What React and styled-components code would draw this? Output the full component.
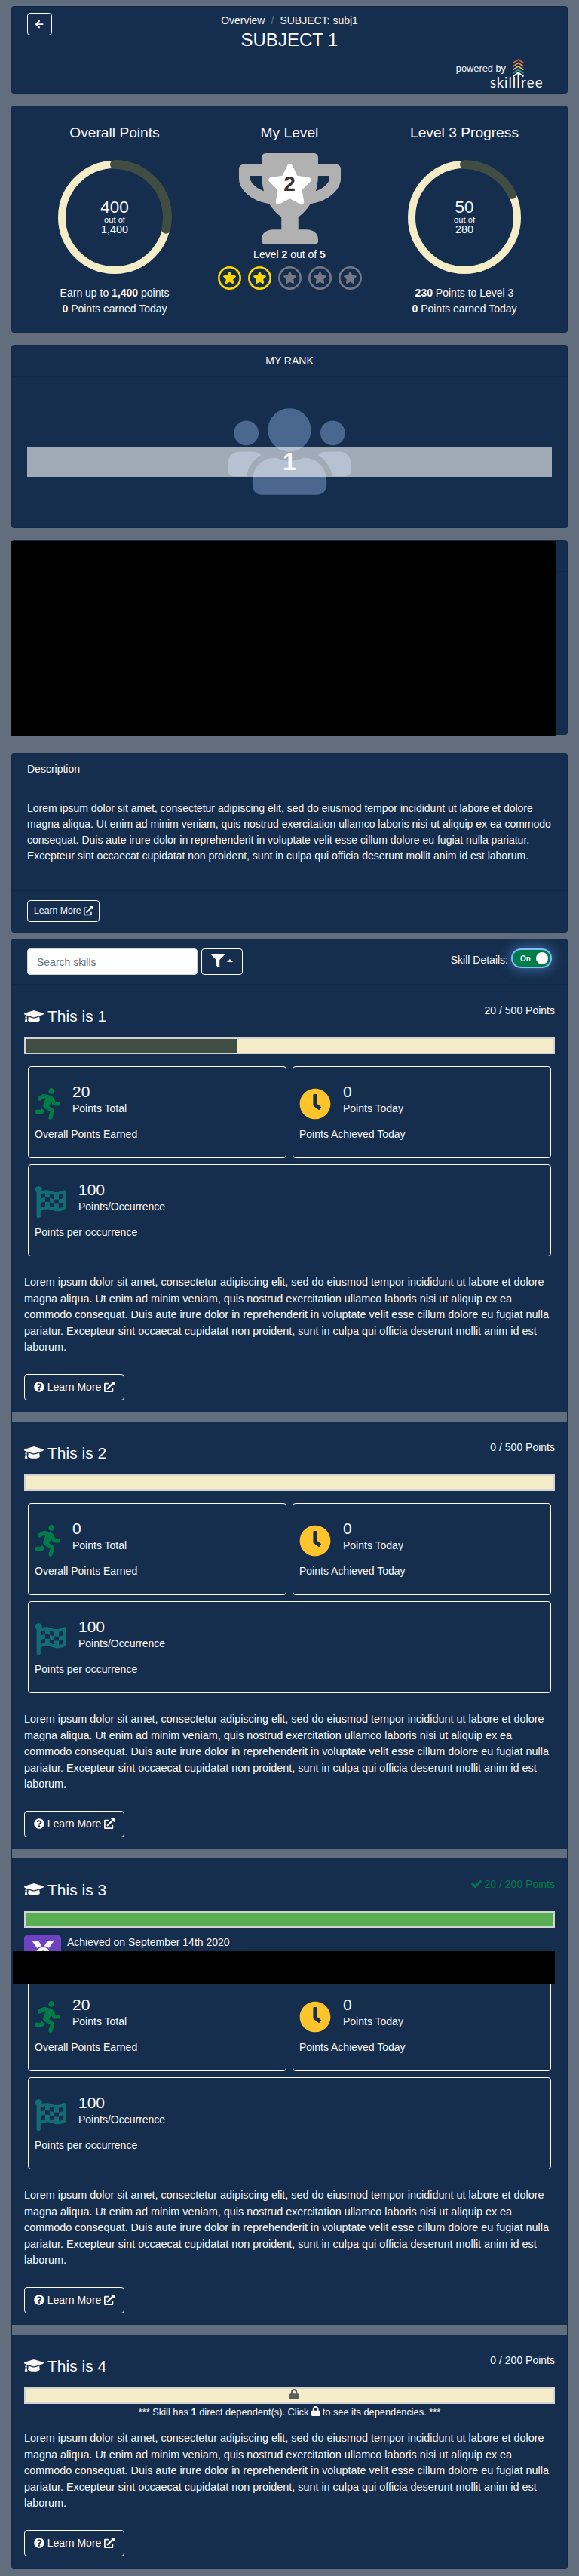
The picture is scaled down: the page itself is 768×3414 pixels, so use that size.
import React from "react";
import styled, { createGlobalStyle } from "styled-components";
import {
  FaArrowLeft, FaTrophy, FaStar, FaUsers, FaExternalLinkAlt, FaFilter, FaGraduationCap,
  FaRunning, FaClock, FaFlagCheckered, FaQuestionCircle, FaCheck, FaMedal, FaLock,
} from "react-icons/fa";

const c = {
  page: "#626d7d",
  card: "#152e4d",
  text: "#fcf9f9",
  cream: "#f5edc8",
  dark: "#3f4d43",
  green: "#007c49",
  edge: "rgba(0,0,0,.125)",
};

const LOREM =
  "Lorem ipsum dolor sit amet, consectetur adipiscing elit, sed do eiusmod tempor incididunt ut labore et dolore magna aliqua. Ut enim ad minim veniam, quis nostrud exercitation ullamco laboris nisi ut aliquip ex ea commodo consequat. Duis aute irure dolor in reprehenderit in voluptate velit esse cillum dolore eu fugiat nulla pariatur. Excepteur sint occaecat cupidatat non proident, sunt in culpa qui officia deserunt mollit anim id est laborum.";

const Global = createGlobalStyle`
  * { box-sizing: border-box; }
  body {
    margin: 0;
    background: ${c.page};
    color: ${c.text};
    font: 14px/21px "Liberation Sans", Arial, sans-serif;
  }
  svg { display: block; flex: none; }
`;

const Page = styled.main`
  display: flex;
  flex-direction: column;
  padding: 8px 15px;
`;

const Card = styled.section`
  position: relative;
  display: flex;
  flex-direction: column;
  height: ${(p) => p.$height}px;
  margin-bottom: ${(p) => p.$gap || 0}px;
  background: ${c.card};
  border: 1px solid ${c.edge};
  border-radius: 4px;
`;

const CardHeader = styled.header`
  display: flex;
  align-items: center;
  justify-content: ${(p) => p.$justify || "flex-start"};
  height: ${(p) => p.$height}px;
  padding: 0 20px;
  border-bottom: 1px solid ${c.edge};
`;

const Button = styled.button`
  display: inline-flex;
  align-items: center;
  justify-content: center;
  gap: 0.27em;
  height: ${(p) => p.$height || 35}px;
  width: ${(p) => (p.$width ? `${p.$width}px` : "auto")};
  padding: 0 ${(p) => p.$pad ?? 12}px ${(p) => p.$lift || 0}px;
  background: transparent;
  border: 1px solid ${c.text};
  border-radius: 4px;
  color: ${c.text};
  font: inherit;
  font-size: ${(p) => p.$size || 14}px;
  white-space: nowrap;
`;

/* title card */
const TitleRow = styled.div`
  display: grid;
  grid-template-columns: 33px 1fr 33px;
  padding: 8px 20px 0;
`;
const TitleText = styled.div`
  display: flex;
  flex-direction: column;
  align-items: center;
`;
const Breadcrumb = styled.nav`
  display: flex;
  gap: 8px;
`;
const Slash = styled.span`
  color: #6c757d;
`;
const Title = styled.h1`
  margin: 0;
  font-size: 24px;
  font-weight: 400;
  line-height: 29px;
`;
const Powered = styled.div`
  display: flex;
  align-items: flex-start;
  justify-content: flex-end;
  margin-top: 11px;
  padding-right: 32px;
  font-size: 12.8px;
`;
const PoweredText = styled.span`
  margin-top: 2px;
  margin-right: -21px;
`;

/* level overview */
const Overview = styled.div`
  display: grid;
  grid-template-columns: repeat(3, 232px);
  padding: 23px 20px 0;
  text-align: center;
`;
const Col = styled.div`
  display: flex;
  flex-direction: column;
  align-items: center;
`;
const ColTitle = styled.h2`
  margin: 0;
  font-size: 19.2px;
  font-weight: 400;
  line-height: 23px;
`;
const RingBox = styled.div`
  display: grid;
  place-items: center;
  width: 154px;
  height: 154px;
  margin: 24px 0 13px;
  > * { grid-area: 1 / 1; }
`;
const RingLabel = styled.div`
  display: flex;
  flex-direction: column;
  align-items: center;
  padding-bottom: 2px;
  font-size: 14.4px;
  line-height: 14px;
`;
const RingValue = styled.span`
  font-size: 22.4px;
  line-height: 23px;
`;
const RingOf = styled.span`
  font-size: 11.2px;
  line-height: 11px;
`;
const TrophyBox = styled.div`
  display: grid;
  justify-items: center;
  height: 120px;
  margin-top: 16px;
  > * { grid-area: 1 / 1; }
`;
const Trophy = styled(FaTrophy)`
  width: 135px;
  height: 120px;
  color: #b1b1b1;
`;
const TrophyStar = styled(FaStar)`
  width: 61px;
  height: 54px;
  margin-top: 14px;
  color: #fff;
`;
const TrophyLevel = styled.strong`
  margin-top: 25px;
  font-size: 28px;
  line-height: 32px;
  color: #333;
`;
const LevelText = styled.div`
  margin-top: 4px;
`;
const Stars = styled.div`
  display: flex;
  gap: 9px;
  margin-top: 5px;
`;

/* rank */
const RankBody = styled.div`
  display: grid;
  justify-items: center;
  align-items: start;
  padding: 34px 20px 0;
  > * { grid-area: 1 / 1; }
`;
const RankIcon = styled(FaUsers)`
  width: 164px;
  height: 131px;
  color: #4a678f;
`;
const RankBand = styled.div`
  width: 100%;
  height: 40px;
  margin-top: 59px;
  background: rgba(255, 255, 255, 0.6);
  text-align: center;
  font-size: 32px;
  font-weight: 700;
  line-height: 40px;
`;

const Blackout = styled.div`
  position: absolute;
  top: ${(p) => p.$top}px;
  left: ${(p) => p.$left}px;
  width: ${(p) => p.$width}px;
  height: ${(p) => p.$height}px;
  background: #000;
`;

/* description */
const DescriptionText = styled.p`
  flex: 1;
  margin: 0;
  padding: 20px 20px 0;
`;
const CardFooter = styled.footer`
  height: 55px;
  padding: 12px 20px;
  border-top: 1px solid ${c.edge};
`;

/* skills toolbar */
const Search = styled.input`
  width: 226px;
  height: 35px;
  margin-right: 5px;
  padding: 0 12px;
  border: 1px solid #ced4da;
  border-radius: 4px;
  background: #fff;
  font: inherit;
  &::placeholder { color: #6c757d; opacity: 1; }
`;
const Caret = styled.span`
  border: 4px solid transparent;
  border-top: 0;
  border-bottom-color: ${c.text};
`;
const DetailsLabel = styled.span`
  margin: -5px 4px 0 auto;
`;
const Toggle = styled.span`
  display: flex;
  align-items: center;
  justify-content: space-between;
  width: 50px;
  height: 22px;
  margin: -9px 2px 0 2px;
  padding: 0 3px 0 10px;
  border-radius: 11px;
  background: ${c.green};
  box-shadow: 0 0 0 2px #80bdff, 0 0 16px 3px rgba(100, 160, 240, 0.6);
  font-size: 10px;
  font-weight: 700;
`;
const Knob = styled.span`
  width: 16px;
  height: 16px;
  border-radius: 50%;
  background: #fff;
`;

/* skill */
const SkillBlock = styled.article`
  position: relative;
  display: flex;
  flex-direction: column;
  padding: 0 16px 16px;
  & + & { border-top: 12px solid ${c.page}; }
`;
const SkillHead = styled.div`
  display: flex;
  justify-content: space-between;
  height: 70px;
  padding-top: 23px;
`;
const SkillName = styled.h3`
  display: flex;
  align-items: center;
  gap: 5px;
  height: 25px;
  margin: 6px 0 0;
  font-size: 21px;
  font-weight: 400;
`;
const SkillPoints = styled.div`
  display: flex;
  align-items: center;
  gap: 4px;
  height: 23px;
  color: ${(p) => (p.$done ? c.green : c.text)};
`;
const Bar = styled.div`
  display: grid;
  height: 22px;
  border: 2px solid #d3d3d3;
  background: ${c.cream};
  > * { grid-area: 1 / 1; }
`;
const BarFill = styled.div`
  width: ${(p) => p.$percent}%;
  background: ${(p) => (p.$done ? "#59ad52" : c.dark)};
`;
const Lock = styled(FaLock)`
  width: ${(p) => p.$size * 0.875}px;
  height: ${(p) => p.$size}px;
`;
const BarLock = styled(Lock)`
  justify-self: center;
  margin-left: 12px;
  color: #5c5c5c;
`;
const Dependency = styled.div`
  display: flex;
  justify-content: center;
  gap: 3.5px;
  height: 34px;
  padding-top: 1px;
  font-size: 12.8px;
  line-height: 20px;
  svg { margin-top: 2px; }
`;
const Achieved = styled.div`
  display: flex;
  gap: 8px;
  height: 52px;
  padding-top: 10px;
  line-height: 18px;
`;
const Badge = styled.span`
  display: flex;
  justify-content: center;
  width: 49px;
  height: 42px;
  padding-top: 7px;
  border-radius: 4px;
  background: #6f42c1;
`;
const Stats = styled.div`
  display: grid;
  grid-template-columns: 1fr 1fr;
  gap: 8px;
  margin: 16px 5px 0;
`;
const Stat = styled.div`
  grid-column: ${(p) => (p.$wide ? "1 / -1" : "auto")};
  height: 122px;
  padding: 21px 8px 0;
  border: 1px solid ${c.text};
  border-radius: 4px;
`;
const StatTop = styled.div`
  display: flex;
  gap: 16px;
  height: 58px;
  svg { margin-top: 7px; }
`;
const Runner = styled(FaRunning)`
  width: 34px;
  height: 42px;
  color: ${c.green};
`;
const StatValue = styled.div`
  font-size: 21px;
  line-height: 24px;
`;
const SkillText = styled.p`
  margin: ${(p) => (p.$tight ? 1 : 24)}px 0 24px;
  font-size: 14.4px;
  line-height: 21.6px;
`;
const SkillAction = styled.div`
  display: flex;
`;

const Logo = () => (
  <svg width="70" height="46" viewBox="0 0 70 46" fill="none" strokeWidth="1.7">
    <path d="M30.500 5.500 37.500 1 44.500 5.500" stroke="#d8644c" />
    <path d="M30.500 10 37.500 5.500 44.500 10" stroke="#e08a50" />
    <path d="M30.500 14.500 37.500 10 44.500 14.500" stroke="#e3b45c" />
    <path d="M30.500 19 37.500 14.500 44.500 19" stroke="#2c9a84" />
    <path d="M30.500 23.500 37.500 18 44.500 23.500M37.500 18V38" stroke="#fff" />
    <text x="0" y="38" fill="#fff" fontFamily="Lato, sans-serif" fontSize="18.500" textLength="34">skill</text>
    <text x="41" y="38" fill="#fff" fontFamily="Lato, sans-serif" fontSize="18.500" textLength="28.500">ree</text>
  </svg>
);

const Ring = ({ value, total, label }) => {
  const length = 2 * Math.PI * 70;
  return (
    <RingBox>
      <svg width="154" height="154" viewBox="0 0 154 154" fill="none">
        <circle cx="77" cy="77" r="70" stroke={c.cream} strokeWidth="10" />
        <circle
          cx="77" cy="77" r="70" stroke={c.dark} strokeWidth="12" strokeLinecap="round"
          strokeDasharray={`${(length * value) / total} ${length}`} transform="rotate(-90 77 77)"
        />
      </svg>
      <RingLabel>
        <RingValue>{value}</RingValue>
        <RingOf>out of</RingOf>
        <span>{label}</span>
      </RingLabel>
    </RingBox>
  );
};

const CircledStar = ({ on }) => {
  const color = on ? "#ffd700" : "#777785";
  return (
    <svg width="31" height="31" viewBox="0 0 31 31">
      <circle cx="15.500" cy="15.500" r="14.200" fill="none" stroke={color} strokeWidth="2.600" />
      <FaStar x="6.500" y="6" size={18} color={color} />
    </svg>
  );
};

const Skill = ({ n, points, percent, done, locked }) => (
  <SkillBlock>
    <SkillHead>
      <SkillName><FaGraduationCap size={26} />This is {n}</SkillName>
      <SkillPoints $done={done}>{done && <FaCheck size={14} />}{points} Points</SkillPoints>
    </SkillHead>
    <Bar>
      {percent > 0 && <BarFill $percent={percent} $done={done} />}
      {locked && <BarLock $size={14} />}
    </Bar>
    {done && (
      <Achieved>
        <Badge><FaMedal size={28} /></Badge>
        Achieved on September 14th 2020
      </Achieved>
    )}
    {locked ? (
      <Dependency>
        <span>*** Skill has <b>1</b> direct dependent(s). Click</span>
        <Lock $size={13} />
        <span>to see its dependencies. ***</span>
      </Dependency>
    ) : (
      <Stats>
        <Stat>
          <StatTop>
            <Runner />
            <div><StatValue>{percent > 0 ? 20 : 0}</StatValue>Points Total</div>
          </StatTop>
          Overall Points Earned
        </Stat>
        <Stat>
          <StatTop>
            <FaClock size={42} color="#ffc42b" />
            <div><StatValue>0</StatValue>Points Today</div>
          </StatTop>
          Points Achieved Today
        </Stat>
        <Stat $wide>
          <StatTop>
            <FaFlagCheckered size={42} color="#146c75" />
            <div><StatValue>100</StatValue>Points/Occurrence</div>
          </StatTop>
          Points per occurrence
        </Stat>
      </Stats>
    )}
    <SkillText $tight={locked}>{LOREM}</SkillText>
    <SkillAction>
      <Button><FaQuestionCircle />Learn More<FaExternalLinkAlt /></Button>
    </SkillAction>
    {done && <Blackout $top={123} $left={1} $width={719} $height={44} />}
  </SkillBlock>
);

export default function App() {
  return (
    <Page>
      <Global />
      <Card $height={116} $gap={16}>
        <TitleRow>
          <Button $height={30} $width={33} $pad={0} $size={12.25}><FaArrowLeft /></Button>
          <TitleText>
            <Breadcrumb><span>Overview</span><Slash>/</Slash><span>SUBJECT: subj1</span></Breadcrumb>
            <Title>SUBJECT 1</Title>
          </TitleText>
        </TitleRow>
        <Powered><PoweredText>powered by</PoweredText><Logo /></Powered>
      </Card>

      <Card $height={301} $gap={16}>
        <Overview>
          <Col>
            <ColTitle>Overall Points</ColTitle>
            <Ring value={400} total={1400} label="1,400" />
            <div>Earn up to <b>1,400</b> points</div>
            <div><b>0</b> Points earned Today</div>
          </Col>
          <Col>
            <ColTitle>My Level</ColTitle>
            <TrophyBox>
              <Trophy />
              <TrophyStar />
              <TrophyLevel>2</TrophyLevel>
            </TrophyBox>
            <LevelText>Level <b>2</b> out of <b>5</b></LevelText>
            <Stars>{[1, 2, 3, 4, 5].map((i) => <CircledStar key={i} on={i <= 2} />)}</Stars>
          </Col>
          <Col>
            <ColTitle>Level 3 Progress</ColTitle>
            <Ring value={50} total={280} label="280" />
            <div><b>230</b> Points to Level 3</div>
            <div><b>0</b> Points earned Today</div>
          </Col>
        </Overview>
      </Card>

      <Card $height={243} $gap={16}>
        <CardHeader $height={41} $justify="center">MY RANK</CardHeader>
        <RankBody>
          <RankIcon />
          <RankBand>1</RankBand>
        </RankBody>
      </Card>

      <Card $height={258} $gap={24}>
        <CardHeader $height={41} />
        <Blackout $top={0} $left={-1} $width={723} $height={259} />
      </Card>

      <Card $height={238} $gap={8}>
        <CardHeader $height={42}>Description</CardHeader>
        <DescriptionText>{LOREM}</DescriptionText>
        <CardFooter>
          <Button $height={29} $pad={8} $size={12.25}>Learn More<FaExternalLinkAlt /></Button>
        </CardFooter>
      </Card>

      <Card>
        <CardHeader $height={60}>
          <Search placeholder="Search skills" />
          <Button $width={55} $lift={4}><FaFilter size={18} /><Caret /></Button>
          <DetailsLabel>Skill Details:</DetailsLabel>
          <Toggle>On<Knob /></Toggle>
        </CardHeader>
        <Skill n={1} points="20 / 500" percent={40} />
        <Skill n={2} points="0 / 500" percent={0} />
        <Skill n={3} points="20 / 200" percent={100} done />
        <Skill n={4} points="0 / 200" percent={0} locked />
      </Card>
    </Page>
  );
}
